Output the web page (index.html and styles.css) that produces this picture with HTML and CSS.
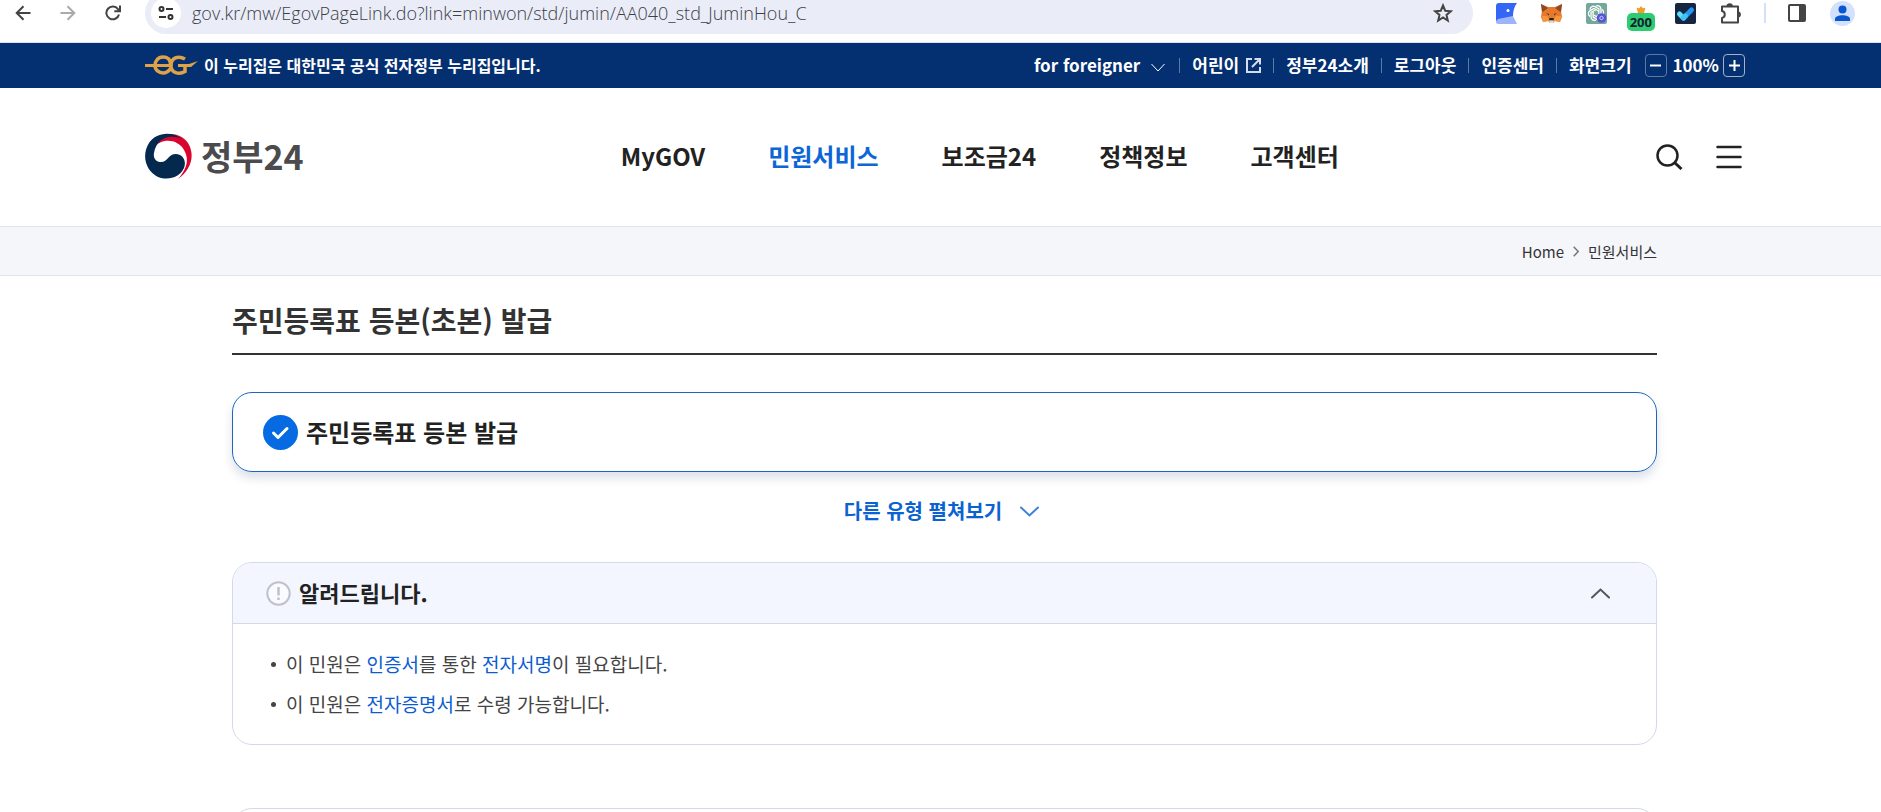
FILE: index.html
```html
<!DOCTYPE html>
<html lang="ko">
<head>
<meta charset="utf-8">
<meta name="viewport" content="width=device-width, initial-scale=1">
<title>주민등록표 등본(초본) 발급 | 정부24</title>
<link rel="stylesheet" href="styles.css">
</head>
<body>
<div class="toolbar">
  <div class="toolbar-nav">
    <button class="icon-btn" aria-label="뒤로"><svg width="16" height="16" viewBox="0 0 16 16" fill="none" stroke="#444" stroke-width="2"><path d="M15.500 8H2M8.500 1.200 1.700 8l6.800 6.800"/></svg></button>
    <button class="icon-btn" aria-label="앞으로"><svg width="16" height="16" viewBox="0 0 16 16" fill="none" stroke="#aaa" stroke-width="2"><path d="M.5 8H14M7.500 1.200 14.300 8l-6.800 6.800"/></svg></button>
    <button class="icon-btn" aria-label="새로고침"><svg width="16" height="16" viewBox="0 0 16 16" fill="none" stroke="#444" stroke-width="2"><path d="M14 9.500A6.400 6.400 0 1 1 13 4.200L14.500 6M15 .5V6.200H9.300"/></svg></button>
  </div>
  <div class="address">
    <button class="site-info" aria-label="사이트 정보"><svg width="16" height="14" viewBox="0 0 16 14" fill="none" stroke="#333" stroke-width="2"><circle cx="3.500" cy="3" r="2"/><path d="M8 3h7M1 11h7"/><circle cx="12.500" cy="11" r="2"/></svg></button>
    <input class="url" type="text" aria-label="주소" value="gov.kr/mw/EgovPageLink.do?link=minwon/std/jumin/AA040_std_JuminHou_C">
    <button class="icon-btn" aria-label="북마크"><svg width="20" height="20" viewBox="0 0 20 20" fill="none" stroke="#444" stroke-width="2"><path d="m10 2.500 2.200 5.200 5.600.5-4.300 3.700 1.300 5.600-4.800-3-4.800 3 1.300-5.600L2.200 8.200l5.600-.5z"/></svg></button>
  </div>
  <div class="extensions">
    <button class="icon-btn" aria-label="확장 프로그램 1"><svg width="21" height="21" viewBox="0 0 21 21"><path d="M2 21a2 2 0 0 1-2-2V13h17l4 8z" fill="#9db4fb"/><path d="M0 3C0 1 1 0 3 0h18c-3 4-4 8-4 13L2 16l-2 2z" fill="#3366f5"/><circle cx="12" cy="7.500" r="1.500" fill="#fff"/></svg></button>
    <button class="icon-btn" aria-label="확장 프로그램 2"><svg width="21" height="20" viewBox="0 0 21 20"><path d="m0 1 7 3h7l7-3-1 7 1 6-2 5-5-1-2 2H9l-2-2-5 1-2-5 1-6z" fill="#e8782a"/><path d="m0 1 7 4-4 3-2 1zM21 1l-7 4 4 3 2 1z" fill="#8b4a25"/><path d="m1 13 5 0 3 5-2 0-5 1zM20 13l-5 0-3 5 2 0 5 1z" fill="#f5963c"/><path d="m5 10 3 1v1.500zM16 10l-3 1v1.500z" fill="#27364a"/><path d="M8.500 15h4l.5 2.500H8z" fill="#222"/><path d="M8 17.500h5L12 20H9z" fill="#ddd"/></svg></button>
    <button class="icon-btn" aria-label="확장 프로그램 3"><svg width="21" height="21" viewBox="0 0 21 21"><rect width="21" height="21" rx="2" fill="#74a899"/><g fill="none" stroke="#fff" stroke-width="1.300"><path id="petal" d="M10 3a3.500 3.500 0 0 1 5 3v4.500L10.500 13"/><use href="#petal" transform="rotate(60 10 10)"/><use href="#petal" transform="rotate(120 10 10)"/><use href="#petal" transform="rotate(180 10 10)"/><use href="#petal" transform="rotate(240 10 10)"/><use href="#petal" transform="rotate(300 10 10)"/></g><circle cx="15.500" cy="15" r="4.800" fill="#5753d6"/><circle cx="15.500" cy="15" r="1.700" fill="none" stroke="#c9c8ff"/></svg></button>
    <button class="icon-btn counter" aria-label="확장 프로그램 4"><svg width="10" height="7" viewBox="0 0 10 8"><path d="M5 0 7 2.500 10 2 8.500 8h-7L0 2l3 .5z" fill="#f59a2b"/></svg><span class="count">200</span></button>
    <button class="icon-btn" aria-label="확장 프로그램 5"><svg width="21" height="21" viewBox="0 0 21 21"><rect width="21" height="21" rx="2" fill="#152542"/><path d="m4.500 11 4 4" stroke="#5de0f5" stroke-width="5" stroke-linecap="round"/><path d="m8.500 15 8-8" stroke="#2397f3" stroke-width="5" stroke-linecap="round"/><path d="m8.500 15 2-2" stroke="#3fc4f5" stroke-width="5" stroke-linecap="round"/></svg></button>
    <button class="icon-btn" aria-label="확장 프로그램"><svg width="22" height="22" viewBox="0 0 22 22"><path d="M2 4.500h16v16H2v-4.500a3.600 3.600 0 0 0 0-7z" fill="none" stroke="#444" stroke-width="2" stroke-linejoin="round"/><path d="M6.500 4.500a3.200 3.200 0 0 1 6.400 0zM18 9.500a2.900 2.900 0 0 1 0 5.800z" fill="#444"/></svg></button>
    <span class="ext-divider"></span>
    <button class="icon-btn" aria-label="사이드 패널"><svg width="18" height="18" viewBox="0 0 18 18"><rect x="1" y="1" width="16" height="16" rx="1" fill="none" stroke="#444" stroke-width="2"/><path d="M11 1h6v16h-6z" fill="#444"/></svg></button>
    <button class="icon-btn" aria-label="프로필"><svg width="25" height="25" viewBox="0 0 25 25"><circle cx="12.500" cy="12.500" r="12.500" fill="#d3e1fc"/><circle cx="12.500" cy="8.500" r="4" fill="#0b57d0"/><path d="M5 20v-2c0-5 15-5 15 0v2z" fill="#0b57d0"/></svg></button>
  </div>
</div>

<div class="gov-bar">
  <div class="wide gov-row">
    <p class="official">
      <svg width="53" height="20" viewBox="0 0 53 20" fill="none" stroke="#dfa246"><path d="M0 10.500h26M33 10.500h10" stroke-width="3"/><path d="M25.500 10.500C26 4 22 2 18 2c-5 0-8 4-8 8.500s4 7.500 8 7.500c4 0 6-2 8-5" stroke-width="3.500"/><path d="M40 4C33 0 26 3 26 10.500s8 9.500 14 6V11" stroke-width="3.500"/><path d="M34 9h10l9-3-7 6H34z" fill="#dfa246" stroke="none"/></svg>
      <span>이 누리집은 대한민국 공식 전자정부 누리집입니다.</span>
    </p>
    <ul class="util">
      <li><a href="#">for foreigner<svg class="util-chevron" width="14" height="9" viewBox="0 0 14 9" fill="none" stroke="#fff"><path d="m.5 1 6.500 7 6.500-7"/></svg></a></li>
      <li><a href="#">어린이<svg class="util-ext" width="15" height="15" viewBox="0 0 15 15" fill="none" stroke="#d5dceb" stroke-width="2"><path d="M6 1H1v13h13V9M8.500 1H14v5.500M14 1 6 9"/></svg></a></li>
      <li><a href="#">정부24소개</a></li>
      <li><a href="#">로그아웃</a></li>
      <li><a href="#">인증센터</a></li>
      <li class="zoomer"><span class="zoom-label">화면크기</span><button class="zoom-btn" aria-label="축소"><svg width="11" height="11" viewBox="0 0 11 11" stroke="#fff" stroke-width="2"><path d="M0 5.500h11"/></svg></button><span>100%</span><button class="zoom-btn plus" aria-label="확대"><svg width="11" height="11" viewBox="0 0 11 11" stroke="#fff" stroke-width="2"><path d="M0 5.500h11M5.500 0v11"/></svg></button></li>
    </ul>
  </div>
</div>

<header class="header">
  <div class="wide header-row">
    <a class="logo" href="#">
      <svg width="48" height="46" viewBox="0 0 48 46"><path d="M8 10C15-1 34-3 43 10c8 13 2 28-10 36 8-9 12-19 6-29C33 6 16 4 8 16z" fill="#d9052f"/><path d="M37 6C26-3 10 0 4 10-4 23 1 38 13 44c11 4 22 0 26-9 3-8-2-14-8-14-8 0-8 8-15 8-5 0-8-4-7-9C11 6 24 0 37 6z" fill="#04294f"/></svg>
      <span>정부24</span>
    </a>
    <nav class="gnb">
      <a href="#">MyGOV</a>
      <a class="current" href="#">민원서비스</a>
      <a href="#">보조금24</a>
      <a href="#">정책정보</a>
      <a href="#">고객센터</a>
    </nav>
    <div class="header-tools">
      <button class="icon-btn" aria-label="검색"><svg width="27" height="26" viewBox="0 0 27 26" fill="none" stroke="#222" stroke-width="2.500"><circle cx="11.500" cy="11.500" r="10"/><path d="m18.500 18.500 7 6.500" stroke-width="3"/></svg></button>
      <button class="icon-btn" aria-label="전체메뉴"><svg width="26" height="24" viewBox="0 0 26 24" stroke="#222" stroke-width="2.500" stroke-linecap="round"><path d="M1.500 2h23M1.500 12h23M1.500 22h23"/></svg></button>
    </div>
  </div>
</header>

<div class="crumb-bar">
  <nav class="content crumbs" aria-label="현재 위치">
    <a href="#">Home</a>
    <svg width="6" height="11" viewBox="0 0 6 11" fill="none" stroke="#777" stroke-width="1.500"><path d="m.7.7 4.500 4.800L.7 10.300"/></svg>
    <a href="#">민원서비스</a>
  </nav>
</div>

<main class="main">
  <div class="content">
    <h1 class="title">주민등록표 등본(초본) 발급</h1>
    <div class="choice">
      <svg width="35" height="35" viewBox="0 0 35 35"><circle cx="17.500" cy="17.500" r="17.500" fill="#066be3"/><path d="m10.500 18 4.500 4.500 9-9" fill="none" stroke="#fff" stroke-width="3" stroke-linecap="round" stroke-linejoin="round"/></svg>
      <h2>주민등록표 등본 발급</h2>
    </div>
    <div class="more-row">
      <button class="more">다른 유형 펼쳐보기<svg width="19" height="11" viewBox="0 0 19 11" fill="none" stroke="#3a82de" stroke-width="2" stroke-linecap="round"><path d="m1 1.500 8.500 8 8.500-8"/></svg></button>
    </div>
    <section class="panel">
      <div class="panel-head">
        <svg width="25" height="25" viewBox="0 0 25 25" fill="none" stroke="#bfc2cc" stroke-width="2"><circle cx="12.500" cy="12.500" r="11.200" fill="#fafbff"/><path d="M12.500 6v8.500M12.500 16.500V19" stroke-width="2.500"/></svg>
        <h2>알려드립니다.</h2>
        <button class="icon-btn fold" aria-label="접기"><svg width="19" height="11" viewBox="0 0 19 11" fill="none" stroke="#555" stroke-width="2" stroke-linecap="round"><path d="m1 9.500 8.500-8 8.500 8"/></svg></button>
      </div>
      <ul class="notes">
        <li>이 민원은 <a href="#">인증서</a>를 통한 <a href="#">전자서명</a>이 필요합니다.</li>
        <li>이 민원은 <a href="#">전자증명서</a>로 수령 가능합니다.</li>
      </ul>
    </section>
    <section class="panel next"></section>
  </div>
</main>
</body>
</html>
```
FILE: styles.css
```css
* { box-sizing: border-box; }
body {
  display: flex;
  flex-direction: column;
  margin: 0;
  height: 100vh;
  overflow: hidden;
  background: #fff;
  color: #222;
  font-family: "Noto Sans CJK KR", "Noto Sans", sans-serif;
  font-size: 16px;
}
a { color: inherit; text-decoration: none; }
ul { list-style: none; margin: 0; padding: 0; }
h1, h2, p { margin: 0; }
svg { display: block; flex: none; }
button { border: 0; padding: 0; background: none; color: inherit; font: inherit; cursor: pointer; }
.icon-btn { display: flex; flex: none; }

/* browser toolbar */
.toolbar {
  display: flex;
  flex: none;
  align-items: center;
  height: 43px;
  padding: 0 26px 16px 15px;
  border-bottom: 1px solid #d9e4f4;
}
.toolbar-nav { display: flex; gap: 29px; margin-right: 24px; }
.address {
  display: flex;
  flex: 1;
  align-items: center;
  height: 42px;
  padding: 0 20px 0 6px;
  border-radius: 21px;
  background: #eaedf7;
}
.site-info {
  display: grid;
  place-items: center;
  width: 30px;
  height: 30px;
  border-radius: 50%;
  background: #fff;
}
.url {
  flex: 1;
  min-width: 0;
  margin-left: 11px;
  padding: 0;
  border: 0;
  background: none;
  color: #3c4048;
  font: 300 18px "Open Sans", sans-serif;
}
.extensions { display: flex; align-items: center; gap: 24px; margin-left: 23px; }
.counter { flex-direction: column; align-items: center; margin: 0 -4px; padding-top: 10px; }
.count {
  padding: 0 3px;
  border-radius: 5px;
  background: #2ecc71;
  color: #123;
  font: 700 13px/18px "Open Sans", sans-serif;
}
.ext-divider { width: 2px; height: 20px; background: #d3e0f8; margin: 0 -2px; }

/* shared widths */
.gov-bar, .header, .crumb-bar, .main { flex: none; padding-left: 9px; }
.crumb-bar, .main { padding-left: 8px; }
.wide { max-width: 1600px; margin: 0 auto; }
.content { max-width: 1425px; margin: 0 auto; }

/* government strip */
.gov-bar { background: #042f71; color: #fff; }
.gov-row { display: flex; align-items: center; justify-content: space-between; height: 45px; padding-bottom: 1px; }
.official { display: flex; align-items: center; gap: 6px; font-weight: 700; }
.util { display: flex; align-items: center; font-size: 17px; font-weight: 700; line-height: 24px; }
.util li { display: flex; align-items: center; }
.util li + li::before { content: ""; width: 1px; height: 15px; margin: 0 12px; background: #60799f; }
.util a { display: flex; align-items: center; }
.util-chevron { margin: 4px 2px 0 11px; }
.util-ext { margin-left: 7px; }
.zoom-label { margin-right: 13px; }
.zoom-btn {
  display: grid;
  place-items: center;
  width: 22px;
  height: 23px;
  margin-right: 6px;
  border: 1px solid #60799f;
  border-radius: 4px;
}
.zoom-btn.plus { margin: 0 0 0 4px; border-color: #a3b1c9; }

/* header */
.header-row { display: flex; align-items: center; height: 138px; }
.logo { display: flex; align-items: center; gap: 8px; color: #4b4b4d; font-size: 34px; font-weight: 700; line-height: 48px; padding-bottom: 2px; }
.gnb { display: flex; gap: 63px; margin: 0 auto 0 317px; padding-bottom: 3px; font-size: 24px; font-weight: 700; }
.gnb .current { color: #0b66d8; }
.header-tools { display: flex; align-items: center; gap: 33px; padding-right: 3px; }

/* breadcrumb */
.crumb-bar { background: #f5f6fa; border-top: 1px solid #e1e4ec; border-bottom: 1px solid #e1e4ec; }
.crumbs { display: flex; align-items: center; justify-content: flex-end; gap: 9px; height: 48px; color: #333; font-size: 15px; }

/* content */
.main { flex: 1; min-height: 0; overflow: hidden; }
.title {
  height: 79px;
  padding-top: 24px;
  border-bottom: 2px solid #333;
  color: #333;
  font-size: 28px;
  font-weight: 700;
  line-height: 40px;
}
.choice {
  display: flex;
  align-items: center;
  gap: 8px;
  height: 80px;
  margin-top: 37px;
  padding: 0 30px;
  border: 1px solid #1c66bd;
  border-radius: 20px;
  box-shadow: 0 6px 10px rgba(20, 50, 110, 0.15);
}
.choice h2 { font-size: 24px; font-weight: 700; line-height: 36px; }
.more-row { display: flex; justify-content: center; height: 90px; padding: 24px 6px 0 0; }
.more { display: flex; align-items: center; gap: 18px; height: 30px; color: #0b63d1; font-size: 20px; font-weight: 700; line-height: 30px; }
.panel { border: 1px solid #d3d9e8; border-radius: 20px; overflow: hidden; }
.panel-head {
  display: flex;
  align-items: center;
  gap: 8px;
  height: 61px;
  padding: 0 46px 0 33px;
  border-bottom: 1px solid #d3d9e8;
  background: #f3f6ff;
}
.panel-head h2 { font-size: 22px; font-weight: 700; line-height: 32px; padding-bottom: 2px; }
.fold { margin-left: auto; }
.notes { padding: 20px 30px; color: #444; font-size: 19px; line-height: 40px; }
.notes li { display: flex; align-items: center; white-space: pre; }
.notes li::before { content: ""; width: 5px; height: 5px; margin: 0 10px 0 8px; border-radius: 50%; background: #444; }
.notes a { color: #0b5cd0; }
.next { height: 60px; margin-top: 63px; }
```
